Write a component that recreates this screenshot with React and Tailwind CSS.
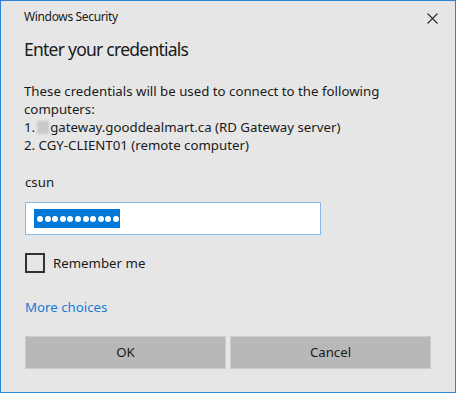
export default function App() {
  const font = { fontFamily: '"Noto Sans", "Open Sans", sans-serif' };
  const dots = Array.from({ length: 11 });
  return (
    <div className="w-[456px] h-[393px] bg-white" style={font}>
      <div className="w-[456px] h-[393px] border border-[#2b86d6] bg-[#e6e6e6] flex flex-col pl-[23px] pr-[23px] text-[#1a1a1a]">
        <div className="flex items-center justify-between h-[30px] pt-[2px]">
          <span className="text-[12px] leading-[14px] tracking-[-0.35px]">Windows Security</span>
          <svg width="11" height="11" viewBox="0 0 11 11" className="mr-[-6px] mt-[2px]">
            <path d="M0.5 0.5 L10.5 10.5 M10.5 0.5 L0.5 10.5" stroke="#2a2a2a" strokeWidth="1.1" />
          </svg>
        </div>
        <h1 className="text-[17.5px] leading-[26px] mt-[5px] tracking-[-0.75px]">Enter your credentials</h1>
        <div className="mt-[20px] text-[13.25px] leading-[18px]">
          <p>These credentials will be used to connect to the following computers:</p>
          <p className="flex items-center">
            <span>1.</span>
            <span className="inline-block w-[12px] h-[13px] bg-[#c9c9c9] blur-[1px] ml-[2px] mr-[1px]"></span>
            <span>gateway.gooddealmart.ca (RD Gateway server)</span>
          </p>
          <p>2. CGY-CLIENT01 (remote computer)</p>
        </div>
        <div className="mt-[19px] text-[13.25px] leading-[18px] pl-[1px]">csun</div>
        <div className="mt-[11px] w-[296px] h-[33px] ml-[1px] border border-[#8ab9e6] bg-white flex items-center pl-[8px]">
          <span className="bg-[#0078d7] h-[19px] w-[86px] flex items-center gap-[1.6px] pl-[3px]">
            {dots.map((_, i) => (
              <span key={i} className="w-[6px] h-[6px] rounded-full bg-white"></span>
            ))}
          </span>
        </div>
        <label className="mt-[18px] ml-[1px] flex items-center gap-[8px]">
          <span className="w-[20px] h-[20px] border-2 border-[#333333] bg-[#e6e6e6]"></span>
          <span className="text-[13.25px] leading-[18px]">Remember me</span>
        </label>
        <div className="mt-[25px] ml-[1px] text-[13.25px] leading-[18px] text-[#1a7ad4]">More choices</div>
        <div className="mt-[20px] ml-[1px] flex gap-[4px]">
          <button className="w-[201px] h-[33px] bg-[#b8b8b8] border border-[#cccccc] text-[13.25px] text-[#1a1a1a]">OK</button>
          <button className="w-[201px] h-[33px] bg-[#b8b8b8] border border-[#cccccc] text-[13.25px] text-[#1a1a1a]">Cancel</button>
        </div>
      </div>
    </div>
  );
}
